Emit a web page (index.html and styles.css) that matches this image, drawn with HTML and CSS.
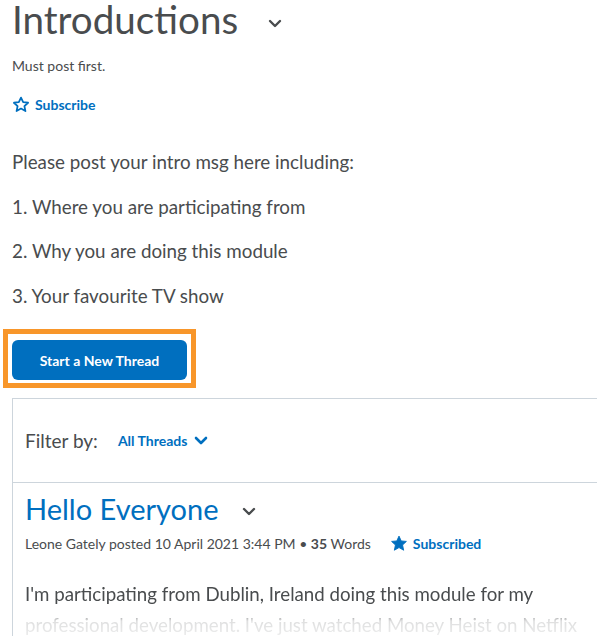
FILE: index.html
```html
<!DOCTYPE html>
<html lang="en">
<head>
<meta charset="utf-8">
<title>Introductions</title>
<link rel="stylesheet" href="styles.css">
</head>
<body>
<div class="page">
  <div class="topic-head">
    <h1 class="topic-title">Introductions</h1>
    <svg class="chev" width="14" height="9" viewBox="0 0 14 9"><path d="M2 2 L7 7 L12 2" fill="none" stroke="#494c4e" stroke-width="2.4" stroke-linecap="round" stroke-linejoin="round"/></svg>
  </div>
  <p class="note">Must post first.</p>
  <a class="subscribe" href="#">
    <svg width="18" height="17" viewBox="0 0 24 23"><path d="M12 2.2 L14.9 8.4 L21.6 9.1 L16.6 13.7 L18 20.4 L12 17 L6 20.4 L7.4 13.7 L2.4 9.1 L9.1 8.4 Z" fill="none" stroke="#006fbf" stroke-width="2.4" stroke-linejoin="round"/></svg>
    <span>Subscribe</span>
  </a>
  <div class="desc">
    <p>Please post your intro msg here including:</p>
    <p>1. Where you are participating from</p>
    <p>2. Why you are doing this module</p>
    <p>3. Your favourite TV show</p>
  </div>
  <div class="focus-ring">
    <button class="primary">Start a New Thread</button>
  </div>
  <section class="threads">
    <div class="filter">
      <span class="filter-label">Filter by:</span>
      <a class="filter-link" href="#">All Threads
        <svg width="14" height="9" viewBox="0 0 14 9"><path d="M2 2 L7 7 L12 2" fill="none" stroke="#006fbf" stroke-width="2.6" stroke-linecap="round" stroke-linejoin="round"/></svg>
      </a>
    </div>
    <article class="post">
      <div class="post-head">
        <h2 class="post-title">Hello Everyone</h2>
        <svg class="chev" width="14" height="9" viewBox="0 0 14 9"><path d="M2 2 L7 7 L12 2" fill="none" stroke="#494c4e" stroke-width="2.4" stroke-linecap="round" stroke-linejoin="round"/></svg>
      </div>
      <div class="meta">
        <span>Leone Gately posted 10 April 2021 3:44 PM • <b>35</b> Words</span>
        <a class="subscribed" href="#">
          <svg width="18" height="17" viewBox="0 0 24 23"><path d="M12 1.5 L15 8 L22 8.7 L16.8 13.5 L18.3 20.6 L12 17 L5.7 20.6 L7.2 13.5 L2 8.7 L9 8 Z" fill="#006fbf" stroke="#006fbf" stroke-width="1.2" stroke-linejoin="round"/></svg>
          <span>Subscribed</span>
        </a>
      </div>
      <div class="post-body">
        <p>I'm participating from Dublin, Ireland doing this module for my professional development. I've just watched Money Heist on Netflix and loved it.</p>
      </div>
    </article>
  </section>
</div>
</body>
</html>
```
FILE: styles.css
```css
html, body {
  margin: 0;
  padding: 0;
  background: #fff;
  overflow: hidden;
}
body {
  font-family: Lato, "Liberation Sans", sans-serif;
  color: #494c4e;
}
.page {
  padding-left: 12px;
  height: 636px;
  overflow: hidden;
}
.topic-head {
  display: flex;
  align-items: center;
  margin-top: -3px;
  height: 44px;
}
.topic-title {
  margin: 0;
  font-size: 38.6px;
  font-weight: 400;
  line-height: 40px;
  color: #494c4e;
}
.topic-head .chev {
  margin-left: 30px;
  margin-top: 8px;
}
.note {
  margin: 16px 0 0;
  font-size: 14px;
  line-height: 18px;
}
.subscribe, .subscribed {
  display: inline-flex;
  align-items: center;
  gap: 5px;
  color: #006fbf;
  text-decoration: none;
  font-weight: 700;
  font-size: 14px;
}
.subscribe {
  margin-top: 21px;
}
.desc {
  margin-top: 34px;
}
.desc p {
  margin: 0 0 20px;
  font-size: 18.8px;
  line-height: 24.5px;
}
.focus-ring {
  display: flex;
  width: fit-content;
  margin: 21px 0 0 -9px;
  border: 5px solid #f8962a;
  padding: 6px 4px 3px 4px;
}
.primary {
  display: block;
  width: 175px;
  height: 40px;
  background: #006fbf;
  color: #fff;
  border: none;
  border-radius: 6px;
  font-family: Lato, "Liberation Sans", sans-serif;
  font-weight: 700;
  font-size: 14px;
}
.threads {
  margin-top: 10px;
  border-top: 1px solid #cdd5dc;
  border-left: 1px solid #cdd5dc;
}
.filter {
  display: flex;
  align-items: center;
  height: 83px;
  padding-left: 12px;
  border-bottom: 1px solid #cdd5dc;
}
.filter-label {
  font-size: 19px;
}
.filter-link {
  display: inline-flex;
  align-items: center;
  gap: 7px;
  margin-left: 20px;
  color: #006fbf;
  text-decoration: none;
  font-size: 14px;
  font-weight: 700;
}
.post {
  padding-left: 12px;
}
.post-head {
  display: flex;
  align-items: center;
  margin-top: 8px;
}
.post-title {
  margin: 0;
  font-size: 29px;
  font-weight: 400;
  line-height: 36px;
  color: #006fbf;
}
.post-head .chev {
  margin-left: 23px;
  margin-top: 4px;
}
.meta {
  display: flex;
  align-items: center;
  margin-top: 8px;
  font-size: 14px;
}
.meta b {
  font-weight: 700;
}
.subscribed {
  margin-left: 19px;
}
.post-body {
  margin-top: 27px;
  -webkit-mask-image: linear-gradient(to bottom, #000 0, #000 30px, rgba(0,0,0,0.18) 42px, rgba(0,0,0,0.08) 62px);
  mask-image: linear-gradient(to bottom, #000 0, #000 30px, rgba(0,0,0,0.18) 42px, rgba(0,0,0,0.08) 62px);
}
.post-body p {
  margin: 0;
  font-size: 18.7px;
  line-height: 31px;
  width: 572px;
}
```
